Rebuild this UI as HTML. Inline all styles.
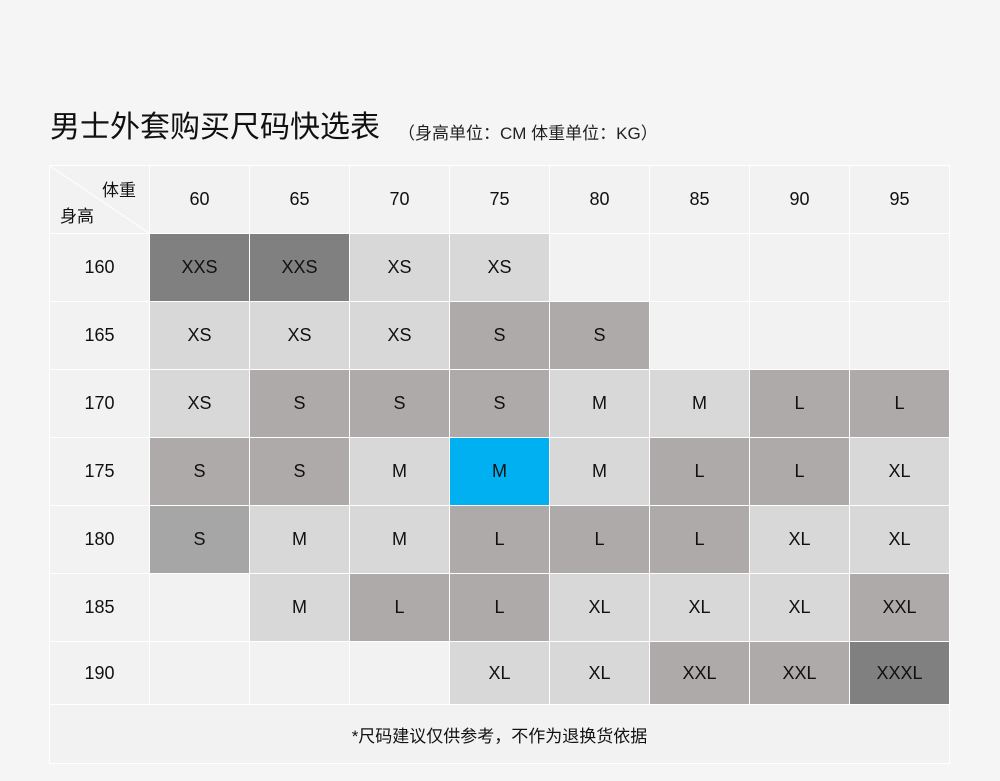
<!DOCTYPE html>
<html><head><meta charset="utf-8"><style>
*{margin:0;padding:0;box-sizing:border-box}
body{width:1000px;height:781px;background:#f5f5f5;font-family:"Liberation Sans","Noto Sans CJK SC",sans-serif;color:#111;position:relative;overflow:hidden}
.title{position:absolute;left:50px;top:102px;font-size:30px;color:#111;white-space:nowrap}
.sub{position:absolute;left:398px;top:119px;font-size:17px;color:#222;white-space:nowrap}
.g{position:absolute;left:49px;top:165px;width:901px;background:#fff;padding:1px;display:grid;grid-template-columns:repeat(9,99px);grid-template-rows:67px repeat(6,67px) 62px 58px;gap:1px}
.g div{background:#f2f2f2;display:flex;align-items:center;justify-content:center;font-size:18px}
.D{background:#808080!important}.L{background:#d8d8d8!important}.M{background:#aeaaa9!important}.S{background:#a6a6a6!important}.B{background:#00b0f0!important}
.f{grid-column:1/10;font-size:17px!important}
.corner{position:relative}
.corner span{position:absolute;font-size:17px}
</style></head><body>
<div class="title">男士外套购买尺码快选表</div>
<div class="sub">（身高单位：CM 体重单位：KG）</div>
<div class="g">
<div class="corner"><svg width="99" height="67" style="position:absolute;left:0;top:0"><line x1="0" y1="0" x2="99" y2="67" stroke="#fff" stroke-width="1"/></svg><span style="left:52px;top:10px">体重</span><span style="left:10px;top:36px">身高</span></div>
<div>60</div><div>65</div><div>70</div><div>75</div><div>80</div><div>85</div><div>90</div><div>95</div>
<div>160</div><div class="D">XXS</div><div class="D">XXS</div><div class="L">XS</div><div class="L">XS</div><div></div><div></div><div></div><div></div>
<div>165</div><div class="L">XS</div><div class="L">XS</div><div class="L">XS</div><div class="M">S</div><div class="M">S</div><div></div><div></div><div></div>
<div>170</div><div class="L">XS</div><div class="M">S</div><div class="M">S</div><div class="M">S</div><div class="L">M</div><div class="L">M</div><div class="M">L</div><div class="M">L</div>
<div>175</div><div class="M">S</div><div class="M">S</div><div class="L">M</div><div class="B">M</div><div class="L">M</div><div class="M">L</div><div class="M">L</div><div class="L">XL</div>
<div>180</div><div class="S">S</div><div class="L">M</div><div class="L">M</div><div class="M">L</div><div class="M">L</div><div class="M">L</div><div class="L">XL</div><div class="L">XL</div>
<div>185</div><div></div><div class="L">M</div><div class="M">L</div><div class="M">L</div><div class="L">XL</div><div class="L">XL</div><div class="L">XL</div><div class="M">XXL</div>
<div>190</div><div></div><div></div><div></div><div class="L">XL</div><div class="L">XL</div><div class="M">XXL</div><div class="M">XXL</div><div class="D">XXXL</div>
<div class="f">*尺码建议仅供参考，不作为退换货依据</div>
</div>
</body></html>
